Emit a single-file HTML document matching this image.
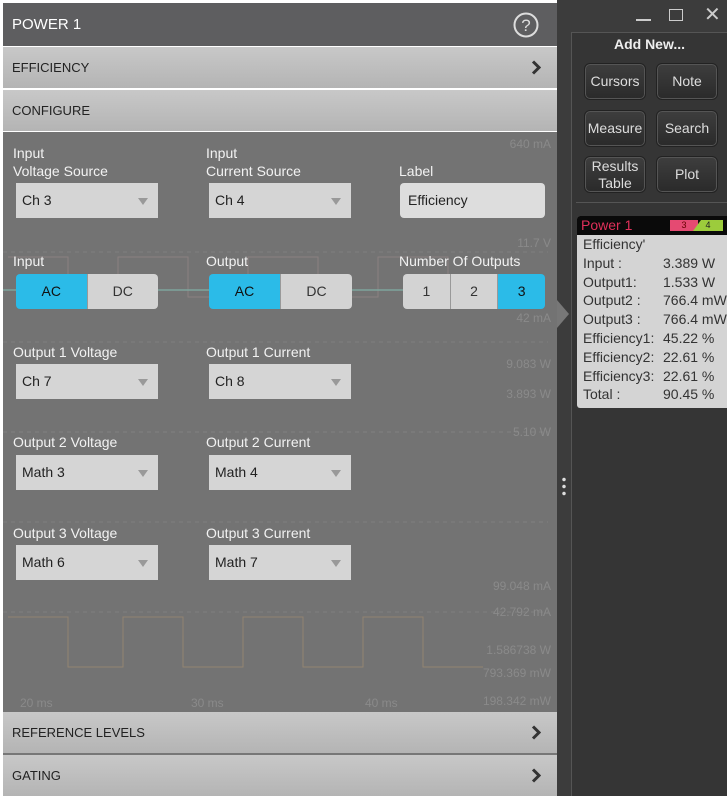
<!DOCTYPE html>
<html><head><meta charset="utf-8"><style>
*{margin:0;padding:0;box-sizing:border-box}
body{width:727px;height:796px;background:#fff;position:relative;overflow:hidden;font-family:"Liberation Sans","DejaVu Sans",sans-serif}
.a{position:absolute}
.hdr{left:3px;top:3px;width:554px;height:43px;background:#5e5e60;color:#fff;font-size:15px;line-height:43px;padding-left:9px}
.bar{left:3px;width:554px;height:41px;background:linear-gradient(#c8c8c8,#b4b4b4);color:#222;font-size:13px;line-height:41px;padding-left:9px}
.chev{position:absolute;right:16px;top:13px}
.content{left:3px;top:132px;width:554px;height:580px;background:#737373}
.lbl{color:#f2f2f2;font-size:14px;line-height:18px}
.dd{width:142px;height:35px;background:#d5d5d5;color:#222;font-size:14px;line-height:35px;padding-left:6px}
.dd::after{content:"";position:absolute;right:10px;top:15px;border-left:5px solid transparent;border-right:5px solid transparent;border-top:7px solid #999}
.tg{height:35px;display:flex;border-radius:4px;overflow:hidden}
.tg div{flex:1;text-align:center;line-height:35px;font-size:14px;background:#d3d3d3;color:#333;border-left:1px solid #999}
.tg div:first-child{border-left:none}
.tg .on{background:#2bbbe8;color:#111}
.rp{left:557px;top:0;width:170px;height:796px;background:#3c3c3c}
.inner{left:571px;top:32px;width:156px;height:764px;background:#353535;border-left:1px solid #555;border-top:1px solid #555}
.btn{width:62px;height:37px;background:linear-gradient(#3e3e3e,#2a2a2a);border:1px solid #222;border-radius:6px;box-shadow:inset 0 0 0 1px #555;color:#ddd;font-size:14px;text-align:center;line-height:35px}
.res{left:577px;top:216px;width:150px;height:192px;background:#d4d4d4;border-radius:3px 0 0 3px;overflow:hidden}
.res .t{background:#0a0a0a;color:#e0305a;height:19px;font-size:14px;line-height:19px;padding-left:4px}
.row{font-size:14px;color:#333;height:18.8px;line-height:18.8px;padding-left:6px;white-space:nowrap}
.row span{position:absolute;left:86px}
</style></head><body>
<div class="a hdr">POWER 1
 <svg style="position:absolute;right:18px;top:9px" width="26" height="26"><circle cx="13" cy="13" r="11.5" fill="none" stroke="#ddd" stroke-width="2"/><text x="13" y="19" font-size="17" fill="#ddd" text-anchor="middle" font-family="Liberation Sans">?</text></svg></div>
<div class="a bar" style="top:47px">EFFICIENCY<svg class="chev" width="10" height="15"><path d="M2 1.5 L8 7.5 L2 13.5" stroke="#333" stroke-width="3" fill="none"/></svg></div>
<div class="a bar" style="top:90px">CONFIGURE</div>
<div class="a content"></div>
<svg class="a" style="left:3px;top:132px" width="554" height="580">
 <g stroke="#888" stroke-width="1" fill="none" opacity=".6">
  <path d="M0 120 H545 M0 210 H545 M0 300 H545 M0 390 H545 M0 480 H545" stroke-dasharray="4 4"/>
  <path d="M5 125 h60 v40 h50 v-40 h70 v40 h60 v-40 h70 v40 h60 v-40 h70 v40 h60" stroke="#9c8a8a"/>
  <path d="M5 485 h60 v50 h55 v-50 h60 v50 h60 v-50 h60 v50 h60 v-50 h60 v50 h60" stroke="#a88f70"/>
 </g>
 <path d="M0 158 H540" stroke="#7fa89f" stroke-width="2" fill="none" opacity=".7"/>
 <g fill="#8a8a8a" font-size="12" font-family="Liberation Sans" text-anchor="end">
  <text x="548" y="16">640 mA</text><text x="548" y="115">11.7 V</text><text x="548" y="190">42 mA</text>
  <text x="548" y="236">9.083 W</text><text x="548" y="266">3.893 W</text><text x="548" y="304">5.10 W</text>
  <text x="548" y="458">99.048 mA</text><text x="548" y="484">42.792 mA</text><text x="548" y="522">1.586738 W</text>
  <text x="548" y="545">793.369 mW</text><text x="548" y="573">198.342 mW</text>
  <text x="17" y="575" text-anchor="start">20 ms</text><text x="188" y="575" text-anchor="start">30 ms</text><text x="362" y="575" text-anchor="start">40 ms</text>
 </g>
</svg>
<div class="a lbl" style="left:13px;top:144px">Input<br>Voltage Source</div>
<div class="a lbl" style="left:206px;top:144px">Input<br>Current Source</div>
<div class="a lbl" style="left:399px;top:162px">Label</div>
<div class="a dd" style="left:16px;top:183px">Ch 3</div>
<div class="a dd" style="left:209px;top:183px">Ch 4</div>
<div class="a" style="left:400px;top:183px;width:145px;height:35px;background:#ddd;border-radius:4px;font-size:14px;line-height:35px;padding-left:8px;color:#222">Efficiency</div>
<div class="a lbl" style="left:13px;top:252px">Input</div>
<div class="a lbl" style="left:206px;top:252px">Output</div>
<div class="a lbl" style="left:399px;top:252px">Number Of Outputs</div>
<div class="a tg" style="left:16px;top:274px;width:142px"><div class="on">AC</div><div>DC</div></div>
<div class="a tg" style="left:209px;top:274px;width:143px"><div class="on">AC</div><div>DC</div></div>
<div class="a tg" style="left:403px;top:274px;width:142px"><div>1</div><div>2</div><div class="on">3</div></div>
<div class="a lbl" style="left:13px;top:343px">Output 1 Voltage</div>
<div class="a lbl" style="left:206px;top:343px">Output 1 Current</div>
<div class="a dd" style="left:16px;top:364px">Ch 7</div>
<div class="a dd" style="left:209px;top:364px">Ch 8</div>
<div class="a lbl" style="left:13px;top:433px">Output 2 Voltage</div>
<div class="a lbl" style="left:206px;top:433px">Output 2 Current</div>
<div class="a dd" style="left:16px;top:455px">Math 3</div>
<div class="a dd" style="left:209px;top:455px">Math 4</div>
<div class="a lbl" style="left:13px;top:524px">Output 3 Voltage</div>
<div class="a lbl" style="left:206px;top:524px">Output 3 Current</div>
<div class="a dd" style="left:16px;top:545px">Math 6</div>
<div class="a dd" style="left:209px;top:545px">Math 7</div>
<div class="a bar" style="top:712px">REFERENCE LEVELS<svg class="chev" width="10" height="15"><path d="M2 1.5 L8 7.5 L2 13.5" stroke="#333" stroke-width="3" fill="none"/></svg></div>
<div class="a" style="left:3px;top:753px;width:554px;height:2px;background:#777"></div>
<div class="a bar" style="top:755px">GATING<svg class="chev" width="10" height="15"><path d="M2 1.5 L8 7.5 L2 13.5" stroke="#333" stroke-width="3" fill="none"/></svg></div>
<div class="a rp"></div>
<div class="a inner"></div>
<div class="a" style="left:557px;top:300px;width:0;height:0;border-top:14px solid transparent;border-bottom:14px solid transparent;border-left:12px solid #777"></div>
<div class="a" style="left:562px;top:476px;width:4px;height:22px;background:radial-gradient(circle,#ddd 1.5px,transparent 2px) 0 0/4px 7px"></div>
<div class="a" style="left:636px;top:19px;width:15px;height:2px;background:#ccc"></div>
<div class="a" style="left:669px;top:9px;width:14px;height:12px;border:1.5px solid #ccc"></div>
<div class="a" style="left:704px;top:2px;color:#ccc;font-size:20px">✕</div>
<div class="a" style="left:572px;top:36px;width:155px;text-align:center;color:#eee;font-weight:bold;font-size:14px">Add New...</div>
<div class="a btn" style="left:584px;top:63px">Cursors</div>
<div class="a btn" style="left:656px;top:63px">Note</div>
<div class="a btn" style="left:584px;top:110px">Measure</div>
<div class="a btn" style="left:656px;top:110px">Search</div>
<div class="a btn" style="left:584px;top:156px;line-height:17px;padding-top:1px">Results<br>Table</div>
<div class="a btn" style="left:656px;top:156px">Plot</div>
<div class="a" style="left:576px;top:202px;width:151px;height:1px;background:#555"></div>
<div class="a res">
 <div class="t">Power 1<span style="position:absolute;left:93px;top:4px;width:28px;height:11px;background:#e54a72;color:#600;font-size:9px;line-height:11px;text-align:center">3</span><span style="position:absolute;left:116px;top:4px;width:30px;height:11px;background:#9ccc3c;color:#222;font-size:9px;line-height:11px;text-align:center;clip-path:polygon(8px 0,100% 0,100% 100%,0 100%)">4</span></div>
 <div class="row">Efficiency'</div>
 <div class="row">Input :<span>3.389 W</span></div>
 <div class="row">Output1:<span>1.533 W</span></div>
 <div class="row">Output2 :<span>766.4 mW</span></div>
 <div class="row">Output3 :<span>766.4 mW</span></div>
 <div class="row">Efficiency1:<span>45.22 %</span></div>
 <div class="row">Efficiency2:<span>22.61 %</span></div>
 <div class="row">Efficiency3:<span>22.61 %</span></div>
 <div class="row">Total :<span>90.45 %</span></div>
</div>
</body></html>
